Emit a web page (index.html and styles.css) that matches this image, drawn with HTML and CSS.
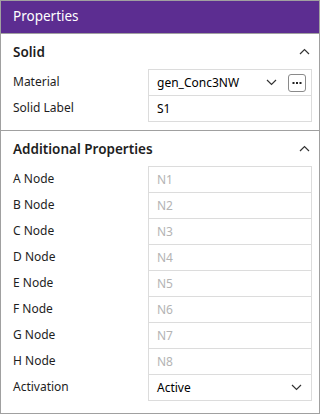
FILE: index.html
```html
<!DOCTYPE html>
<html>

<head>
    <meta charset="UTF-8">
    <title>Properties</title>
    <link rel="stylesheet" href="styles.css">
</head>

<body>
    <div class="panel">
        <div class="panel-title">Properties</div>

        <div class="section">
            <div class="section-head">
                <span>Solid</span>
                <svg class="caret" width="11" height="7" viewBox="0 0 11 7"><polyline points="1,6 5.5,1.5 10,6" /></svg>
            </div>
            <div class="rows">
                <div class="label">Material</div>
                <div class="value">
                    <span class="text">gen_Conc3NW</span>
                    <svg class="drop" width="11" height="7" viewBox="0 0 11 7"><polyline points="1,1 5.5,5.5 10,1" /></svg>
                    <span class="more">
                        <svg width="10" height="4" viewBox="0 0 10 4"><rect x="0.5" y="1" width="2" height="2" /><rect x="4" y="1" width="2" height="2" /><rect x="7.5" y="1" width="2" height="2" /></svg>
                    </span>
                </div>
                <div class="label">Solid Label</div>
                <div class="value"><span class="text">S1</span></div>
            </div>
        </div>

        <div class="section last">
            <div class="section-head">
                <span>Additional Properties</span>
                <svg class="caret" width="11" height="7" viewBox="0 0 11 7"><polyline points="1,6 5.5,1.5 10,6" /></svg>
            </div>
            <div class="rows">
                <div class="label">A Node</div>
                <div class="value"><span class="text hint">N1</span></div>
                <div class="label">B Node</div>
                <div class="value"><span class="text hint">N2</span></div>
                <div class="label">C Node</div>
                <div class="value"><span class="text hint">N3</span></div>
                <div class="label">D Node</div>
                <div class="value"><span class="text hint">N4</span></div>
                <div class="label">E Node</div>
                <div class="value"><span class="text hint">N5</span></div>
                <div class="label">F Node</div>
                <div class="value"><span class="text hint">N6</span></div>
                <div class="label">G Node</div>
                <div class="value"><span class="text hint">N7</span></div>
                <div class="label">H Node</div>
                <div class="value"><span class="text hint">N8</span></div>
                <div class="label">Activation</div>
                <div class="value">
                    <span class="text">Active</span>
                    <svg class="drop end" width="11" height="7" viewBox="0 0 11 7"><polyline points="1,1 5.5,5.5 10,1" /></svg>
                </div>
            </div>
        </div>
    </div>
</body>

</html>
```

FILE: styles.css
```css
body {
    margin: 0;
    font-family: 'Noto Sans', 'Open Sans', sans-serif;
    color: #1e1e1e;
    background: #fff;
}

.panel {
    width: 320px;
    height: 414px;
    box-sizing: border-box;
    border: 1px solid #a0a0a0;
    display: flex;
    flex-direction: column;
}

.panel-title {
    height: 32px;
    line-height: 30px;
    padding-left: 12px;
    background: #5c2d91;
    color: #fff;
    font-size: 13.5px;
    border-bottom: 1px solid #a0a0a0;
}

.section {
    padding-bottom: 8px;
    border-bottom: 1px solid #a0a0a0;
}

.section.last {
    border-bottom: none;
}

.section-head {
    height: 35px;
    display: flex;
    align-items: center;
    justify-content: space-between;
    padding: 0 9px 0 12px;
    font-size: 13.5px;
    font-weight: 600;
}

.caret polyline,
.drop polyline {
    fill: none;
    stroke: #333;
    stroke-width: 1.2;
}

.rows {
    display: grid;
    grid-template-columns: 135px 164px;
    padding-left: 12px;
}

.label {
    height: 26px;
    line-height: 26px;
    font-size: 12px;
}

.value {
    height: 27px;
    box-sizing: border-box;
    border: 1px solid #dcdcdc;
    display: flex;
    align-items: center;
    padding: 0 5px 0 8px;
    font-size: 12px;
    color: #000;
}

.value + .label + .value {
    margin-top: -1px;
}

.label + .value + .label {
    margin-top: -1px;
}

.text {
    flex: 1;
}

.text.hint {
    color: #b4b4b4;
}

.drop {
    margin-right: 11px;
}

.drop.end {
    margin-right: 4px;
}

.more {
    width: 18px;
    height: 18px;
    box-sizing: border-box;
    border: 1px solid #8a8a8a;
    border-radius: 3px;
    display: flex;
    align-items: center;
    justify-content: center;
}

.more rect {
    fill: #222;
}
```
